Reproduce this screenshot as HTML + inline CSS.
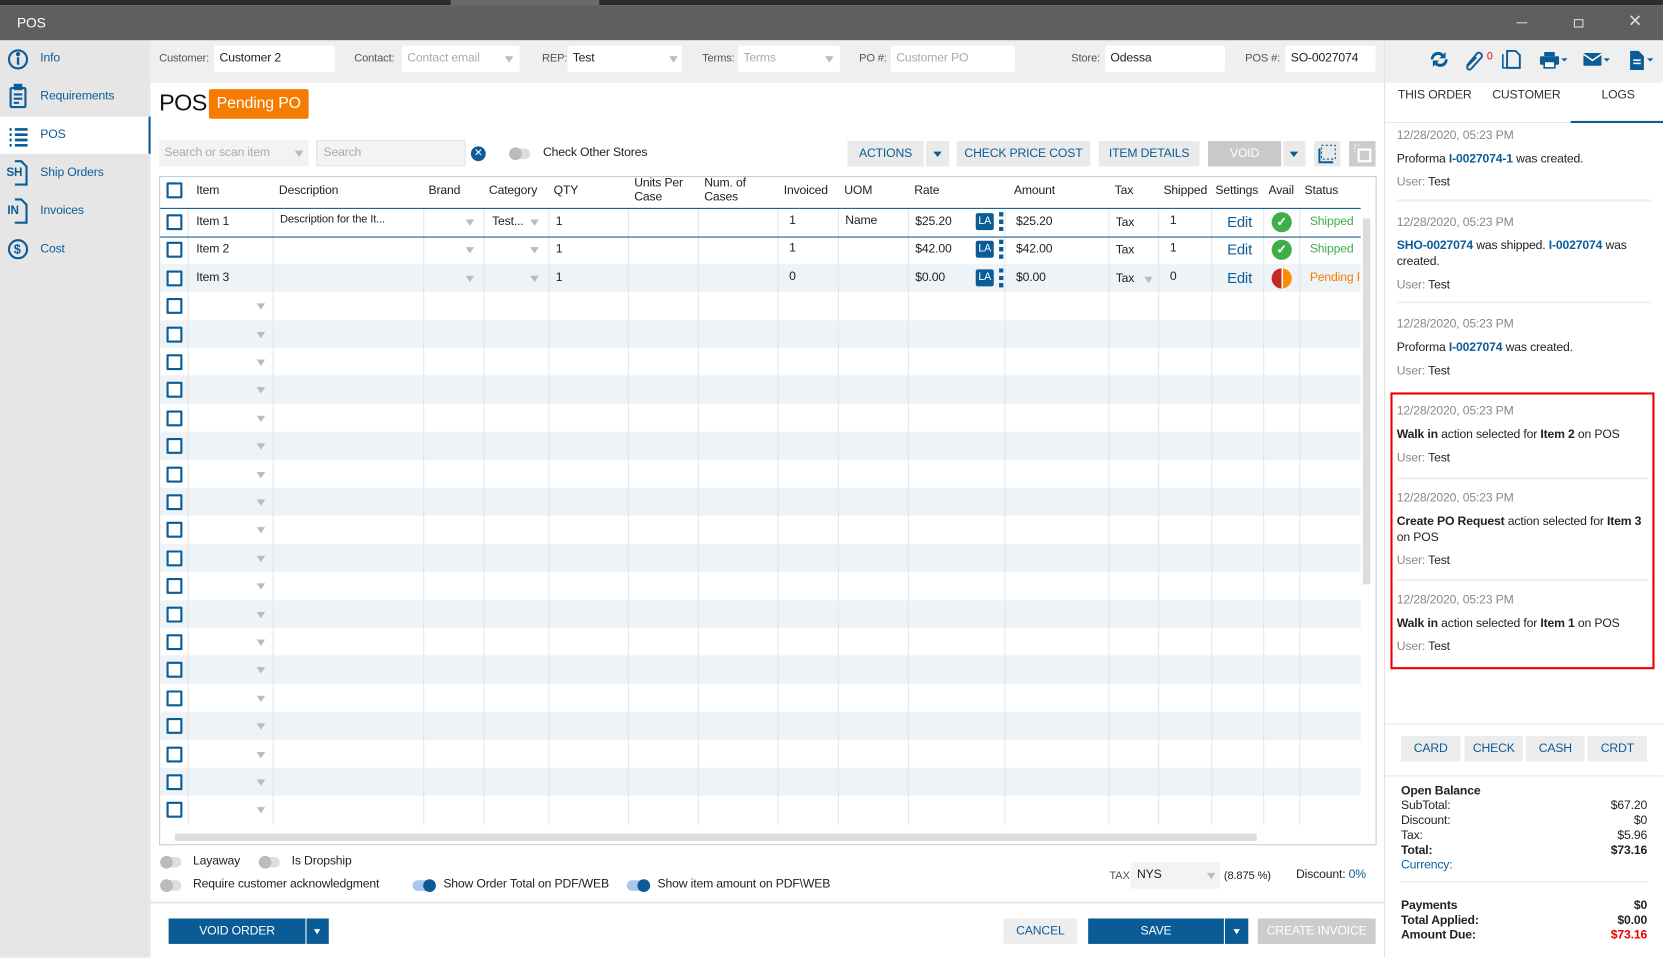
<!DOCTYPE html>
<html><head><meta charset="utf-8">
<style>
*{box-sizing:border-box;margin:0;padding:0}
html,body{width:1663px;height:957px;overflow:hidden;background:#fff}
body{font-family:"Liberation Sans",Arial,sans-serif;font-size:11.5px;color:#222;letter-spacing:-0.15px}
#w{position:absolute;left:0;top:0;width:1568px;height:903px;transform:scale(1.06058);transform-origin:0 0;background:#fff;overflow:hidden}
.a{position:absolute}
.blue{color:#0b5c96}
.fld{position:absolute;top:43px;height:25px;background:#fff;border-radius:2px;padding:6px 5px;font-size:11.5px;white-space:nowrap;overflow:hidden}
.lbl{position:absolute;top:49px;font-size:10.5px;color:#555}
.ph{color:#aaa}
.dd{position:absolute;width:0;height:0;border-left:4px solid transparent;border-right:4px solid transparent;border-top:6px solid #bbb}
.btn{position:absolute;top:133px;height:24px;background:#eaeaea;color:#0b5c96;font-size:11.5px;text-align:center;line-height:24px}
.th{position:absolute;top:174px;font-size:11.5px;line-height:13px}
.cb{position:absolute;width:15px;height:15px;border:2px solid #0b5c96;border-radius:1px;background:#fff}
.vl{position:absolute;top:196px;height:582px;width:1px;background:#e3e6e8}
.tog{position:absolute;width:20px;height:10px;border-radius:5px;background:#ddd}
.tog i{position:absolute;top:-1px;width:12px;height:12px;border-radius:6px;background:#bbb}
.tog.on{background:#a9c6ef}.tog.on i{background:#0b5c96;left:10px}
.log{position:absolute;left:1317px;font-size:11.5px;line-height:15px;width:238px}
.log .d{color:#888}
.log .u{color:#888}
.log b{color:#222}
.pb{position:absolute;top:694px;height:24px;background:#ececec;color:#0b5c96;text-align:center;line-height:24px;font-size:11.5px}
.sm{position:absolute;font-size:11.5px;line-height:14px}
</style></head><body><div id="w">
<div class="a" style="left:0;top:0;width:1568px;height:5px;background:#2d2d2d"></div>
<div class="a" style="left:425px;top:0;width:140px;height:5px;background:#6a6a6a"></div>
<div class="a" style="left:0;top:5px;width:1568px;height:33px;background:#5f5f5f"></div>
<div class="a" style="left:16px;top:14px;color:#fff;font-size:13px">POS</div>
<div class="a" style="left:1430px;top:21px;width:10px;height:1px;background:#ddd"></div>
<div class="a" style="left:1484px;top:18px;width:9px;height:8px;border:1px solid #ddd"></div>
<div class="a" style="left:1535px;top:10px;color:#ddd;font-size:16px">✕</div>

<div class="a" style="left:0;top:38px;width:142px;height:865px;background:#e6e6e6"></div>
<div class="a" style="left:0;top:110px;width:140px;height:35px;background:#fff"></div>
<div class="a" style="left:140px;top:110px;width:2px;height:35px;background:#0b5c96"></div>
<svg class="a" style="left:6px;top:46px" width="22" height="210" viewBox="0 0 22 210" fill="none" stroke="#0b5c96" stroke-width="2">
<circle cx="11" cy="10" r="8.5"/><line x1="11" y1="8" x2="11" y2="15" stroke-width="2.2"/><circle cx="11" cy="5" r="1" fill="#0b5c96"/>
<rect x="4" y="37" width="14" height="18" rx="1"/><rect x="8" y="34" width="6" height="4" fill="#0b5c96"/><line x1="7" y1="43" x2="15" y2="43"/><line x1="7" y1="47" x2="15" y2="47"/><line x1="7" y1="51" x2="12" y2="51"/>
<g stroke-width="2.5"><line x1="3" y1="76" x2="5" y2="76"/><line x1="8" y1="76" x2="20" y2="76"/><line x1="3" y1="81" x2="5" y2="81"/><line x1="8" y1="81" x2="20" y2="81"/><line x1="3" y1="86" x2="5" y2="86"/><line x1="8" y1="86" x2="20" y2="86"/><line x1="3" y1="91" x2="5" y2="91"/><line x1="8" y1="91" x2="20" y2="91"/></g>
<path d="M8 106 L14 106 L19 111 L19 128 L8 128"/>
<path d="M8 142 L14 142 L19 147 L19 164 L8 164"/>
<circle cx="11" cy="189" r="8.5"/>
</svg>
<div class="a" style="left:6px;top:157px;font-size:11px;font-weight:bold;color:#0b5c96">SH</div>
<div class="a" style="left:7px;top:193px;font-size:11px;font-weight:bold;color:#0b5c96">IN</div>
<div class="a" style="left:13px;top:228px;font-size:12px;font-weight:bold;color:#0b5c96">$</div>
<div class="a blue" style="left:38px;top:49px">Info</div>
<div class="a blue" style="left:38px;top:85px">Requirements</div>
<div class="a blue" style="left:38px;top:121px">POS</div>
<div class="a blue" style="left:38px;top:157px">Ship Orders</div>
<div class="a blue" style="left:38px;top:193px">Invoices</div>
<div class="a blue" style="left:38px;top:229px">Cost</div>

<div class="a" style="left:142px;top:38px;width:1163px;height:40px;background:#efefef"></div>
<div class="lbl" style="left:150px">Customer:</div><div class="fld" style="left:202px;width:114px">Customer 2</div>
<div class="lbl" style="left:334px">Contact:</div><div class="fld ph" style="left:379px;width:111px">Contact email</div><div class="dd" style="left:476px;top:53px"></div>
<div class="lbl" style="left:511px">REP:</div><div class="fld" style="left:535px;width:108px">Test</div><div class="dd" style="left:631px;top:53px"></div>
<div class="lbl" style="left:662px">Terms:</div><div class="fld ph" style="left:696px;width:96px">Terms</div><div class="dd" style="left:778px;top:53px"></div>
<div class="lbl" style="left:810px">PO #:</div><div class="fld ph" style="left:840px;width:117px">Customer PO</div>
<div class="lbl" style="left:1010px">Store:</div><div class="fld" style="left:1042px;width:113px">Odessa</div>
<div class="lbl" style="left:1174px">POS #:</div><div class="fld" style="left:1212px;width:85px">SO-0027074</div>

<div class="a" style="left:1305px;top:38px;width:1px;height:865px;background:#e0e0e0"></div>
<div class="a" style="left:1306px;top:38px;width:262px;height:40px;background:#efefef"></div>
<svg class="a" style="left:1345px;top:44px" width="220" height="24" viewBox="0 0 220 24" fill="#0b5c96">
<path d="M4 12a7 7 0 0 1 12-5l2-2v6h-6l2-2a4.5 4.5 0 0 0-7.5 3z M20 12a7 7 0 0 1-12 5l-2 2v-6h6l-2 2a4.5 4.5 0 0 0 7.5-3z"/>
<path d="M38 18 L48 6 a3 3 0 0 1 4 4 L42 21 a2 2 0 0 1-3-3 L47 10" fill="none" stroke="#0b5c96" stroke-width="1.8"/>
<path d="M76 4h8l4 4v12h-12z" fill="none" stroke="#0b5c96" stroke-width="1.8"/><path d="M72 7v13h4" fill="none" stroke="#0b5c96" stroke-width="1.5"/>
<rect x="111" y="5" width="10" height="4"/><rect x="107" y="9" width="18" height="8" rx="1"/><rect x="111" y="14" width="10" height="6" fill="#fff" stroke="#0b5c96" stroke-width="1.5"/><path d="M127 11h6l-3 3z"/>
<rect x="148" y="6" width="17" height="12" rx="1"/><path d="M148 7l8.5 6 8.5-6" fill="none" stroke="#fff" stroke-width="1.5"/><path d="M167 11h6l-3 3z"/>
<path d="M192 4h8l5 5v13h-13z"/><rect x="195" y="12" width="7" height="1.5" fill="#fff"/><rect x="195" y="15" width="7" height="1.5" fill="#fff"/><path d="M208 11h6l-3 3z"/>
</svg>
<div class="a" style="left:1402px;top:48px;color:#e00;font-size:10px">0</div>
<div class="a" style="left:1318px;top:84px;color:#333">THIS ORDER</div>
<div class="a" style="left:1407px;top:84px;color:#333">CUSTOMER</div>
<div class="a" style="left:1510px;top:84px;color:#333">LOGS</div>
<div class="a" style="left:1306px;top:115px;width:262px;height:1px;background:#e6e6e6"></div>
<div class="a" style="left:1481px;top:114px;width:87px;height:2px;background:#0b5c96"></div>

<div class="log" style="top:121px"><div class="d">12/28/2020, 05:23 PM</div><div style="margin-top:7px">Proforma <b style="color:#0b5c96">I-0027074-1</b> was created.</div><div style="margin-top:7px"><span class="u">User:</span> Test</div></div>
<div class="a" style="left:1317px;top:188px;width:240px;height:2px;background:#eee"></div>
<div class="log" style="top:203px"><div class="d">12/28/2020, 05:23 PM</div><div style="margin-top:7px"><b style="color:#0b5c96">SHO-0027074</b> was shipped. <b style="color:#0b5c96">I-0027074</b> was created.</div><div style="margin-top:7px"><span class="u">User:</span> Test</div></div>
<div class="a" style="left:1317px;top:284px;width:240px;height:2px;background:#eee"></div>
<div class="log" style="top:299px"><div class="d">12/28/2020, 05:23 PM</div><div style="margin-top:7px">Proforma <b style="color:#0b5c96">I-0027074</b> was created.</div><div style="margin-top:7px"><span class="u">User:</span> Test</div></div>
<div class="a" style="left:1311px;top:370px;width:249px;height:261px;border:2px solid #e00"></div>
<div class="log" style="top:381px"><div class="d">12/28/2020, 05:23 PM</div><div style="margin-top:7px"><b>Walk in</b> action selected for <b>Item 2</b> on POS</div><div style="margin-top:7px"><span class="u">User:</span> Test</div></div>
<div class="a" style="left:1317px;top:450px;width:237px;height:2px;background:#eee"></div>
<div class="log" style="top:463px"><div class="d">12/28/2020, 05:23 PM</div><div style="margin-top:7px"><b>Create PO Request</b> action selected for <b>Item 3</b> on POS</div><div style="margin-top:7px"><span class="u">User:</span> Test</div></div>
<div class="a" style="left:1317px;top:546px;width:237px;height:2px;background:#eee"></div>
<div class="log" style="top:559px"><div class="d">12/28/2020, 05:23 PM</div><div style="margin-top:7px"><b>Walk in</b> action selected for <b>Item 1</b> on POS</div><div style="margin-top:7px"><span class="u">User:</span> Test</div></div>
<div class="a" style="left:1306px;top:682px;width:262px;height:1px;background:#e6e6e6"></div>
<div class="pb" style="left:1321px;width:56px">CARD</div>
<div class="pb" style="left:1381px;width:55px">CHECK</div>
<div class="pb" style="left:1439px;width:55px">CASH</div>
<div class="pb" style="left:1497px;width:56px">CRDT</div>
<div class="a" style="left:1306px;top:731px;width:262px;height:1px;background:#e6e6e6"></div>
<div class="sm" style="left:1321px;top:739px;font-weight:bold">Open Balance</div>
<div class="sm" style="left:1321px;top:753px">SubTotal:</div><div class="sm" style="left:1450px;width:103px;text-align:right;top:753px">$67.20</div>
<div class="sm" style="left:1321px;top:767px">Discount:</div><div class="sm" style="left:1450px;width:103px;text-align:right;top:767px">$0</div>
<div class="sm" style="left:1321px;top:781px">Tax:</div><div class="sm" style="left:1450px;width:103px;text-align:right;top:781px">$5.96</div>
<div class="sm" style="left:1321px;top:795px;font-weight:bold">Total:</div><div class="sm" style="left:1450px;width:103px;text-align:right;top:795px;font-weight:bold">$73.16</div>
<div class="sm blue" style="left:1321px;top:809px">Currency:</div>
<div class="a" style="left:1321px;top:831px;width:232px;height:1px;background:#e6e6e6"></div>
<div class="sm" style="left:1321px;top:847px;font-weight:bold">Payments</div><div class="sm" style="left:1450px;width:103px;text-align:right;top:847px;font-weight:bold">$0</div>
<div class="sm" style="left:1321px;top:861px;font-weight:bold">Total Applied:</div><div class="sm" style="left:1450px;width:103px;text-align:right;top:861px;font-weight:bold">$0.00</div>
<div class="sm" style="left:1321px;top:875px;font-weight:bold">Amount Due:</div><div class="sm" style="left:1450px;width:103px;text-align:right;top:875px;font-weight:bold;color:#e00">$73.16</div>

<div class="a" style="left:150px;top:84px;font-size:22px;color:#111;letter-spacing:-0.5px">POS</div>
<div class="a" style="left:197px;top:84px;width:94px;height:28px;background:#f57c00;border-radius:2px;color:#fff;font-size:15px;line-height:28px;text-align:center">Pending PO</div>

<div class="a ph" style="left:150px;top:132px;width:141px;height:25px;background:#f3f3f3;padding:6px 5px">Search or scan item</div><div class="dd" style="left:278px;top:142px"></div>
<div class="a ph" style="left:298px;top:132px;width:141px;height:25px;background:#f3f3f3;border:1px solid #e4e4e4;padding:5px 6px">Search</div>
<div class="a" style="left:444px;top:138px;width:14px;height:14px;border-radius:7px;background:#0b5c96;color:#fff;font-size:10px;line-height:14px;text-align:center">✕</div>
<div class="tog" style="left:480px;top:140px"><i style="left:0"></i></div>
<div class="a" style="left:512px;top:138px">Check Other Stores</div>
<div class="btn" style="left:799px;width:72px">ACTIONS</div>
<div class="btn" style="left:873px;width:22px"></div><div class="dd" style="left:880px;top:143px;border-top-color:#0b5c96;border-top-width:5px"></div>
<div class="btn" style="left:902px;width:126px">CHECK PRICE COST</div>
<div class="btn" style="left:1036px;width:95px">ITEM DETAILS</div>
<div class="btn" style="left:1139px;width:69px;background:#c9c9c9;color:#fff">VOID</div>
<div class="btn" style="left:1210px;width:21px"></div><div class="dd" style="left:1216px;top:143px;border-top-color:#0b5c96;border-top-width:5px"></div>
<div class="btn" style="left:1239px;width:25px"></div>
<svg class="a" style="left:1243px;top:136px" width="18" height="18"><rect x="3" y="1" width="13" height="13" fill="none" stroke="#0b5c96" stroke-dasharray="2 2"/><path d="M1 4v13h13" fill="none" stroke="#0b5c96" stroke-width="2"/></svg>
<div class="btn" style="left:1272px;width:25px;background:#ccc"></div>
<svg class="a" style="left:1276px;top:136px" width="18" height="18"><rect x="5" y="5" width="11" height="11" fill="none" stroke="#fff" stroke-width="2"/><path d="M1 1h6M1 3v6" stroke="#fff" stroke-dasharray="1.5 1.5"/></svg>

<div class="a" style="left:150px;top:166px;width:1148px;height:631px;border:1px solid #b9cfe0"></div>
<div id="rows"></div>
<div class="a" style="left:151px;top:196px;width:1132px;height:1px;background:#0b5c96"></div>
<div class="a" style="left:151px;top:223px;width:1132px;height:1px;background:#0b5c96"></div>
<div class="cb" style="left:157px;top:172px"></div>
<div class="th" style="left:185px;top:174px">Item</div>
<div class="th" style="left:263px">Description</div>
<div class="th" style="left:404px">Brand</div>
<div class="th" style="left:461px">Category</div>
<div class="th" style="left:522px">QTY</div>
<div class="th" style="left:598px;top:167px">Units Per<br>Case</div>
<div class="th" style="left:664px;top:167px">Num. of<br>Cases</div>
<div class="th" style="left:739px">Invoiced</div>
<div class="th" style="left:796px">UOM</div>
<div class="th" style="left:862px">Rate</div>
<div class="th" style="left:956px">Amount</div>
<div class="th" style="left:1051px">Tax</div>
<div class="th" style="left:1097px">Shipped</div>
<div class="th" style="left:1146px">Settings</div>
<div class="th" style="left:1196px">Avail</div>
<div class="th" style="left:1230px">Status</div>
<div class="a" style="left:1285px;top:206px;width:7px;height:345px;background:#ddd"></div>
<div class="a" style="left:165px;top:786px;width:1020px;height:7px;background:#ddd"></div>

<div class="tog" style="left:151px;top:808px"><i style="left:0"></i></div><div class="a" style="left:182px;top:806px">Layaway</div>
<div class="tog" style="left:244px;top:808px"><i style="left:0"></i></div><div class="a" style="left:275px;top:806px">Is Dropship</div>
<div class="tog" style="left:151px;top:830px"><i style="left:0"></i></div><div class="a" style="left:182px;top:828px">Require customer acknowledgment</div>
<div class="tog on" style="left:389px;top:830px"><i></i></div><div class="a" style="left:418px;top:828px">Show Order Total on PDF/WEB</div>
<div class="tog on" style="left:591px;top:830px"><i></i></div><div class="a" style="left:620px;top:828px">Show item amount on PDF\WEB</div>
<div class="a" style="left:1046px;top:820px;font-size:10.5px;color:#555">TAX</div>
<div class="a" style="left:1066px;top:813px;width:84px;height:25px;background:#f3f3f3;padding:6px 6px">NYS</div><div class="dd" style="left:1138px;top:823px"></div>
<div class="a" style="left:1154px;top:820px;font-size:10.5px">(8.875 %)</div>
<div class="a" style="left:1222px;top:819px">Discount: <span class="blue">0%</span></div>
<div class="a" style="left:142px;top:850px;width:1163px;height:2px;background:#e8e8e8"></div>
<div class="a" style="left:159px;top:866px;width:129px;height:24px;background:#0b5c96;color:#fff;text-align:center;line-height:24px">VOID ORDER</div>
<div class="a" style="left:289px;top:866px;width:21px;height:24px;background:#0b5c96"></div><div class="dd" style="left:296px;top:876px;border-top-color:#fff;border-top-width:5px;border-left-width:3px;border-right-width:3px"></div>
<div class="a" style="left:946px;top:866px;width:70px;height:24px;background:#eee;color:#0b5c96;text-align:center;line-height:24px">CANCEL</div>
<div class="a" style="left:1026px;top:866px;width:128px;height:24px;background:#0b5c96;color:#fff;text-align:center;line-height:24px">SAVE</div>
<div class="a" style="left:1155px;top:866px;width:22px;height:24px;background:#0b5c96"></div><div class="dd" style="left:1163px;top:876px;border-top-color:#fff;border-top-width:5px;border-left-width:3px;border-right-width:3px"></div>
<div class="a" style="left:1186px;top:866px;width:111px;height:24px;background:#ccc;color:#fff;text-align:center;line-height:24px">CREATE INVOICE</div>
</div>
<script>
var h='';
var cols=[177,257,399,456,517,592,658,733,790,856,947,1045,1092,1142,1191,1225];
for(var i=0;i<22;i++){var y=196+i*26.4;if(i%2==0&&i>=2)h+='<div class="a" style="left:151px;top:'+y+'px;width:1132px;height:26.4px;background:#edf3f7"></div>';}
cols.forEach(function(c){h+='<div class="vl" style="left:'+c+'px"></div>';});
for(var i=0;i<22;i++){var y=196+i*26.4;h+='<div class="cb" style="left:157px;top:'+(y+6)+'px"></div>';
 if(i>=3) h+='<div class="dd" style="left:242px;top:'+(y+11)+'px"></div>';}
var r=[['Item 1','Description for the It...','Test...','1','1','Name','$25.20','$25.20','Tax','1','Shipped','g'],['Item 2','','','1','1','','$42.00','$42.00','Tax','1','Shipped','g'],['Item 3','','','1','0','','$0.00','$0.00','Tax','0','Pending P','o']];
r.forEach(function(d,i){var y=196+i*26.4+7;
 h+='<div class="a" style="left:185px;top:'+y+'px">'+d[0]+'</div>';
 if(d[1])h+='<div class="a" style="left:264px;top:'+(y-2)+'px;font-size:10.5px">'+d[1]+'</div>';
 h+='<div class="dd" style="left:439px;top:'+(y+4)+'px"></div><div class="dd" style="left:500px;top:'+(y+4)+'px"></div>';
 if(d[2])h+='<div class="a" style="left:464px;top:'+y+'px">'+d[2]+'</div>';
 h+='<div class="a" style="left:524px;top:'+y+'px">'+d[3]+'</div>';
 h+='<div class="a" style="left:744px;top:'+(y-1)+'px">'+d[4]+'</div>';
 h+='<div class="a" style="left:797px;top:'+(y-1)+'px">'+d[5]+'</div>';
 h+='<div class="a" style="left:863px;top:'+y+'px">'+d[6]+'</div>';
 h+='<div class="a" style="left:920px;top:'+(y-2)+'px;width:17px;height:16px;background:#0b5c96;color:#fff;font-size:10px;line-height:16px;text-align:center;border-radius:2px">LA</div>';
 h+='<div class="a" style="left:942px;top:'+(y-3)+'px;width:4px;height:18px;background:repeating-linear-gradient(#0b5c96 0 4px,transparent 4px 7px)"></div>';
 h+='<div class="a" style="left:958px;top:'+y+'px">'+d[7]+'</div>';
 h+='<div class="a" style="left:1052px;top:'+(y+1)+'px">'+d[8]+'</div>';
 if(i==2)h+='<div class="dd" style="left:1079px;top:'+(y+5)+'px"></div>';
 h+='<div class="a" style="left:1103px;top:'+(y-1)+'px">'+d[9]+'</div>';
 h+='<div class="a" style="left:1157px;top:'+(y-2)+'px;font-size:14px;color:#0b5c96">Edit</div>';
 if(d[11]=='g')h+='<div class="a" style="left:1199px;top:'+(y-3)+'px;width:19px;height:19px;border-radius:10px;background:#3fae49;color:#fff;font-size:12px;text-align:center;line-height:19px;font-weight:bold">✓</div>';
 else h+='<div class="a" style="left:1199px;top:'+(y-3)+'px;width:19px;height:19px;border-radius:10px;background:linear-gradient(90deg,#c62828 50%,#fff 50%,#fff 56%,#fb8c00 56%)"></div>';
 h+='<div class="a" style="left:1235px;top:'+y+'px;color:'+(d[11]=='g'?'#3fae49':'#f57c00')+';white-space:nowrap;width:47px;overflow:hidden">'+d[10]+'</div>';
});
document.getElementById('rows').innerHTML=h;
</script>
</body></html>
